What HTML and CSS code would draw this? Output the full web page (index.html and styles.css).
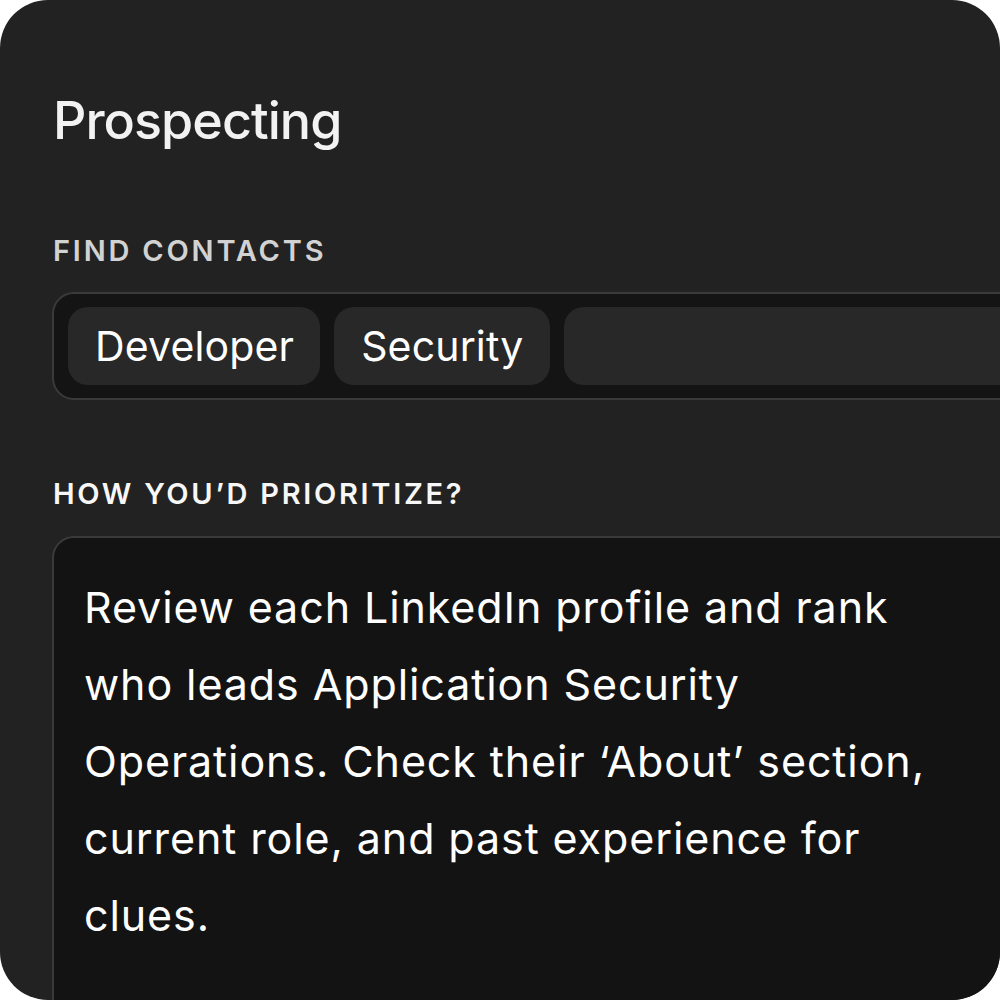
FILE: index.html
```html
<!DOCTYPE html>
<html lang="en">
<head>
<meta charset="utf-8">
<title>Prospecting</title>
<link rel="stylesheet" href="styles.css">
</head>
<body>
<div class="card">
  <h1 class="title">Prospecting</h1>
  <div class="label label-muted">FIND CONTACTS</div>
  <div class="tagbox">
    <span class="chip">Developer</span>
    <span class="chip">Security</span>
    <span class="chip chip-empty"></span>
  </div>
  <div class="label label-bright">HOW YOU’D PRIORITIZE?</div>
  <div class="textarea"><p class="prompt">Review each LinkedIn profile and rank who leads Application Security Operations. Check their ‘About’ section, current role, and past experience for clues.</p></div>
</div>
</body>
</html>
```

FILE: styles.css
```css
html, body {
  margin: 0;
  padding: 0;
  background: #ffffff;
}
body {
  width: 1000px;
  height: 1000px;
  overflow: hidden;
  font-family: Inter, "Noto Sans", sans-serif;
}
.card {
  box-sizing: border-box;
  width: 1000px;
  height: 1000px;
  background: #222222;
  border-radius: 48px;
  overflow: hidden;
  padding: 90px 0 0 52px;
}
.title {
  margin: 0 0 0 1px;
  font-size: 52px;
  line-height: 62px;
  font-weight: 450;
  color: #f2f2f2;
  letter-spacing: -0.95px;
}
.label {
  margin-left: 1px;
  font-size: 29px;
  line-height: 35px;
  font-weight: 600;
  letter-spacing: 2.8px;
}
.label-muted {
  margin-top: 81px;
  color: #d2d2d2;
}
.label-bright {
  margin-top: 76px;
  color: #f7f7f7;
  letter-spacing: 2.7px;
}
.tagbox {
  box-sizing: border-box;
  margin-top: 24px;
  width: 1000px;
  display: flex;
  gap: 14px;
  padding: 13px 14px;
  background: #141414;
  border: 2px solid #3a3a3a;
  border-radius: 22px;
}
.chip {
  box-sizing: border-box;
  height: 78px;
  padding: 0 26px 0 27px;
  display: flex;
  align-items: center;
  background: #282828;
  border-radius: 20px;
  color: #ffffff;
  font-size: 41px;
  font-weight: 400;
  letter-spacing: 0.15px;
}
.chip-empty {
  flex: 1;
}
.textarea {
  box-sizing: border-box;
  margin-top: 25px;
  width: 1000px;
  height: 600px;
  padding: 31px 31px 31px 30px;
  background: #131313;
  border: 2px solid #3a3a3a;
  border-radius: 22px;
}
.prompt {
  margin: 0;
  width: 880px;
  color: #ffffff;
  font-size: 43px;
  line-height: 77px;
  font-weight: 400;
  letter-spacing: 0.9px;
}
```
